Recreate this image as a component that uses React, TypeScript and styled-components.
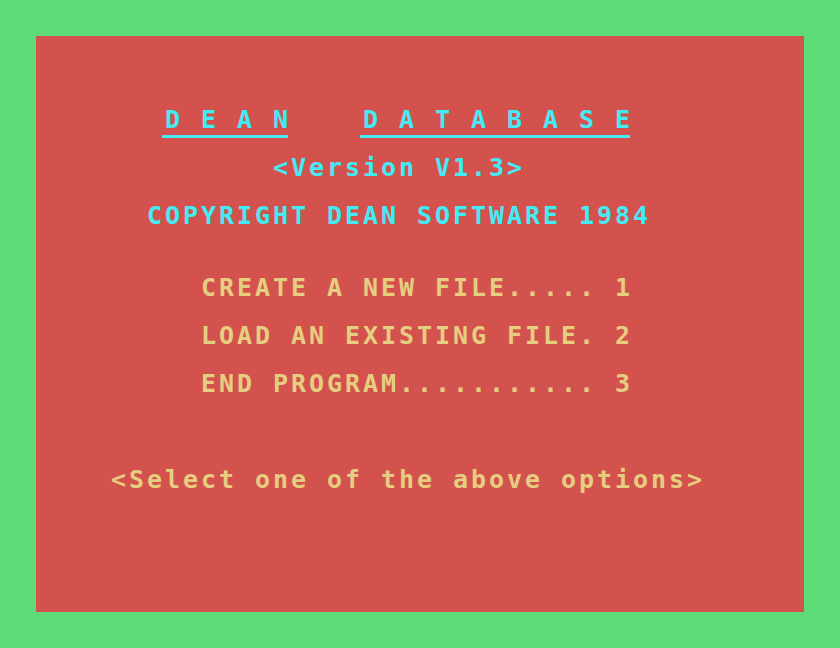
import React from "react";
import styled, { createGlobalStyle } from "styled-components";

const GlobalStyle = createGlobalStyle`
  html, body { margin: 0; padding: 0; background: #5edc78; }
  #root { width: 840px; height: 648px; }
`;

const Border = styled.div`
  width: 840px;
  height: 648px;
  box-sizing: border-box;
  padding: 36px;
  background: #5edc78;
`;

const Screen = styled.div`
  width: 768px;
  height: 576px;
  background: #d4524d;
  display: flex;
  flex-direction: column;
  padding-left: 18px;
  box-sizing: border-box;
  overflow: hidden;
`;

const Row = styled.div<{ $col: number; $color: string }>`
  height: 24px;
  flex: none;
  padding-left: ${(p) => p.$col * 18 + 3}px;
  font-family: "DejaVu Sans Mono", "Liberation Mono", monospace;
  font-weight: 700;
  font-size: 25px;
  line-height: 24px;
  letter-spacing: 2.95px;
  white-space: pre;
  color: ${(p) => p.$color};
`;

const Under = styled.span`
  position: relative;
  &::after {
    content: "";
    position: absolute;
    left: -3px;
    right: 3px;
    top: 29.5px;
    height: 3px;
    background: currentColor;
  }
`;

const CYAN = "#42ebf5";
const YELLOW = "#e6ce80";

type Line = { row: number; col: number; color: string; content: React.ReactNode };

const lines: Line[] = [
  {
    row: 3,
    col: 6,
    color: CYAN,
    content: (
      <>
        <Under>D E A N</Under>
        {"    "}
        <Under>D A T A B A S E</Under>
      </>
    ),
  },
  { row: 5, col: 12, color: CYAN, content: "<Version V1.3>" },
  { row: 7, col: 5, color: CYAN, content: "COPYRIGHT DEAN SOFTWARE 1984" },
  { row: 10, col: 8, color: YELLOW, content: "CREATE A NEW FILE..... 1" },
  { row: 12, col: 8, color: YELLOW, content: "LOAD AN EXISTING FILE. 2" },
  { row: 14, col: 8, color: YELLOW, content: "END PROGRAM........... 3" },
  { row: 18, col: 3, color: YELLOW, content: "<Select one of the above options>" },
];

export default function App() {
  const rows = Array.from({ length: 24 }, (_, i) => lines.find((l) => l.row === i));
  return (
    <>
      <GlobalStyle />
      <Border>
        <Screen>
          {rows.map((l, i) => (
            <Row key={i} $col={l ? l.col : 0} $color={l ? l.color : YELLOW}>
              {l ? l.content : ""}
            </Row>
          ))}
        </Screen>
      </Border>
    </>
  );
}
